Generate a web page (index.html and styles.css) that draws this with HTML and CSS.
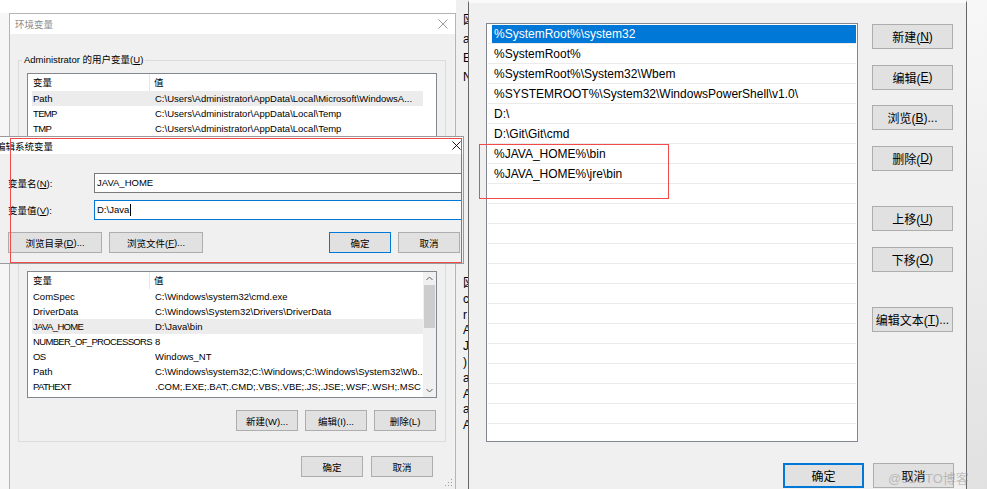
FILE: index.html
```html
<!DOCTYPE html>
<html>
  <head>
    <meta charset="UTF-8" />
    <title>环境变量</title>
    <link rel="stylesheet" href="styles.css">
  </head>
  <body>
    <div class="desktop">
      <!-- window behind, only a sliver of it shows -->
      <div class="behind">
        <div class="frag frag-top">
          <div>図</div><div>a</div><div>E</div><div>N</div>
        </div>
        <div class="frag frag-low">
          <div>図</div><div>c</div><div>r</div><div>A</div><div>J</div><div>)</div><div>a</div><div>A</div><div>a</div><div>A</div>
        </div>
      </div>

      <section class="env-dialog">
        <div class="titlebar inactive">
          <span>环境变量</span>
          <svg class="close" viewBox="0 0 10 10"><path d="M0.5 0.5 9.5 9.5M9.5 0.5 0.5 9.5"></path></svg>
        </div>
        <div class="env-body">
          <div class="group">
            <div class="group-label">Administrator 的用户变量(<u>U</u>)</div>
            <div class="listview">
              <div class="lv-main">
                <div class="lv-head"><span>变量</span><span>值</span></div>
                <div class="lv-row selected"><span>Path</span><span>C:\Users\Administrator\AppData\Local\Microsoft\WindowsA...</span></div>
                <div class="lv-row"><span class="caps">TEMP</span><span>C:\Users\Administrator\AppData\Local\Temp</span></div>
                <div class="lv-row"><span class="caps">TMP</span><span>C:\Users\Administrator\AppData\Local\Temp</span></div>
              </div>
              <div class="vscroll blank"></div>
            </div>
            <div class="btn-row">
              <button class="btn">新建(N)...</button>
              <button class="btn">编辑(E)...</button>
              <button class="btn">删除(D)</button>
            </div>
          </div>

          <div class="group group-sys">
            <div class="group-label">系统变量(<u>S</u>)</div>
            <div class="listview">
              <div class="lv-main">
                <div class="lv-head"><span>变量</span><span>值</span></div>
                <div class="lv-row"><span>ComSpec</span><span>C:\Windows\system32\cmd.exe</span></div>
                <div class="lv-row"><span>DriverData</span><span>C:\Windows\System32\Drivers\DriverData</span></div>
                <div class="lv-row selected"><span class="caps">JAVA_HOME</span><span>D:\Java\bin</span></div>
                <div class="lv-row"><span class="caps">NUMBER_OF_PROCESSORS</span><span>8</span></div>
                <div class="lv-row"><span class="caps">OS</span><span>Windows_NT</span></div>
                <div class="lv-row"><span>Path</span><span>C:\Windows\system32;C:\Windows;C:\Windows\System32\Wb...</span></div>
                <div class="lv-row"><span class="caps">PATHEXT</span><span>.COM;.EXE;.BAT;.CMD;.VBS;.VBE;.JS;.JSE;.WSF;.WSH;.MSC</span></div>
              </div>
              <div class="vscroll">
                <svg class="arrow" viewBox="0 0 13 13"><polyline points="3.5,8 6.5,5 9.5,8"></polyline></svg>
                <div class="thumb"></div>
                <div class="track"></div>
                <svg class="arrow" viewBox="0 0 13 13"><polyline points="3.5,5 6.5,8 9.5,5"></polyline></svg>
              </div>
            </div>
            <div class="btn-row">
              <button class="btn">新建(W)...</button>
              <button class="btn">编辑(I)...</button>
              <button class="btn">删除(L)</button>
            </div>
          </div>

          <div class="btn-row footer">
            <button class="btn">确定</button>
            <button class="btn">取消</button>
          </div>
        </div>
        <svg class="grip" viewBox="0 0 8 8">
          <rect x="6" y="0" width="1" height="1"></rect>
          <rect x="3" y="3" width="1" height="1"></rect><rect x="6" y="3" width="1" height="1"></rect>
          <rect x="0" y="6" width="1" height="1"></rect><rect x="3" y="6" width="1" height="1"></rect><rect x="6" y="6" width="1" height="1"></rect>
        </svg>
      </section>

      <section class="edit-dialog">
        <div class="titlebar">
          <span>编辑系统变量</span>
          <svg class="close small" viewBox="0 0 10 10"><path d="M0.5 0.5 9.5 9.5M9.5 0.5 0.5 9.5"></path></svg>
        </div>
        <div class="edit-body">
          <div class="field">
            <label>变量名(<u>N</u>):</label>
            <div class="input">JAVA_HOME</div>
          </div>
          <div class="field">
            <label>变量值(<u>V</u>):</label>
            <div class="input focused">D:\Java<span class="caret"></span></div>
          </div>
          <div class="edit-buttons">
            <button class="btn wide">浏览目录(<u>D</u>)...</button>
            <button class="btn wide">浏览文件(<u>F</u>)...</button>
            <span class="spacer"></span>
            <button class="btn default">确定</button>
            <button class="btn">取消</button>
          </div>
        </div>
      </section>

      <section class="path-dialog">
        <div class="path-main">
          <div class="path-list">
            <div class="path-row selected"><span>%SystemRoot%\system32</span></div>
            <div class="path-row"><span>%SystemRoot%</span></div>
            <div class="path-row"><span>%SystemRoot%\System32\Wbem</span></div>
            <div class="path-row"><span>%SYSTEMROOT%\System32\WindowsPowerShell\v1.0\</span></div>
            <div class="path-row"><span>D:\</span></div>
            <div class="path-row"><span>D:\Git\Git\cmd</span></div>
            <div class="path-row"><span>%JAVA_HOME%\bin</span></div>
            <div class="path-row"><span>%JAVA_HOME%\jre\bin</span></div>
            <div class="path-row"><span></span></div>
            <div class="path-row"><span></span></div>
            <div class="path-row"><span></span></div>
            <div class="path-row"><span></span></div>
            <div class="path-row"><span></span></div>
            <div class="path-row"><span></span></div>
            <div class="path-row"><span></span></div>
            <div class="path-row"><span></span></div>
            <div class="path-row"><span></span></div>
            <div class="path-row"><span></span></div>
            <div class="path-row"><span></span></div>
            <div class="path-row"><span></span></div>
            <div class="path-row"><span></span></div>
          </div>
          <div class="side-buttons">
            <button class="btn side">新建(<u>N</u>)</button>
            <button class="btn side">编辑(<u>E</u>)</button>
            <button class="btn side">浏览(<u>B</u>)...</button>
            <button class="btn side">删除(<u>D</u>)</button>
            <button class="btn side apart">上移(<u>U</u>)</button>
            <button class="btn side">下移(<u>O</u>)</button>
            <button class="btn side apart">编辑文本(<u>T</u>)...</button>
          </div>
        </div>
        <div class="path-footer">
          <button class="btn side default">确定</button>
          <button class="btn side">取消</button>
        </div>
      </section>

      <div class="far-strip"></div>

      <div class="mark mark-left"></div>
      <div class="mark mark-right"></div>
      <div class="watermark">@51CTO博客</div>
    </div>
  </body>
</html>
```

FILE: styles.css
```css
:root {
  --face: #f0f0f0;
  --btn: #e1e1e1;
  --btn-border: #adadad;
  --accent: #0078d7;
  --list-border: #828790;
  --mark: #f24a4a;
}

* {
  box-sizing: border-box;
}

body {
  margin: 0;
  font-family: "Liberation Sans", "Noto Sans CJK SC", sans-serif;
  font-size: 9.5px;
  color: #000;
}

u {
  text-decoration: underline;
}

.desktop {
  position: relative;
  width: 987px;
  height: 489px;
  overflow: hidden;
  background: linear-gradient(#fff 0 13px, #f6f6f6 13px);
}

/* shared bits */

.btn {
  font: inherit;
  color: #000;
  background: var(--btn);
  border: 1px solid var(--btn-border);
  border-radius: 0;
  padding: 0;
  margin: 0;
  width: 62px;
  height: 21px;
  display: flex;
  align-items: center;
  justify-content: center;
  white-space: nowrap;
}

.btn.default {
  border-color: var(--accent);
}

.titlebar {
  background: #fff;
  display: flex;
  align-items: center;
  justify-content: space-between;
  white-space: nowrap;
}

.close {
  width: 10px;
  height: 10px;
  stroke: #000;
  stroke-width: 1;
  fill: none;
}

.inactive {
  color: #8c8c8c;
}

.inactive .close {
  stroke: #9a9a9a;
}

/* environment variables dialog */

.env-dialog {
  position: absolute;
  left: 9px;
  top: 13px;
  width: 447px;
  height: 477px;
  border: 1px solid #b5b5b5;
  background: var(--face);
  display: flex;
  flex-direction: column;
}

.env-dialog .titlebar {
  height: 20px;
  padding: 0 7px 0 5px;
}

.env-body {
  padding: 0 9px 0 8px;
}

.group {
  border: 1px solid #dcdcdc;
  margin-top: 26px;
  padding: 0 8px 11px;
}

.group-sys {
  margin-top: 15px;
  padding-bottom: 10px;
}

.group-label {
  display: table;
  margin: -7px 0 0 -5px;
  padding: 0 2px;
  line-height: 12px;
  background: var(--face);
}

.listview {
  margin-top: 7px;
  height: 127px;
  border: 1px solid var(--list-border);
  background: #fff;
  display: flex;
  overflow: hidden;
}

.lv-main {
  flex: 1;
  min-width: 0;
  padding-left: 4px;
}

.lv-head {
  display: grid;
  grid-template-columns: 117px 1fr;
  height: 17px;
  line-height: 17px;
  padding-left: 1px;
}

.lv-head span:first-child {
  border-right: 1px solid #e5e5e5;
}

.lv-head span:last-child {
  padding-left: 4px;
}

.lv-row {
  display: grid;
  grid-template-columns: 122px 1fr;
  height: 15px;
  line-height: 15px;
  padding-left: 1px;
  white-space: nowrap;
}

.lv-row span {
  overflow: hidden;
}

.lv-row .caps {
  letter-spacing: -0.65px;
}

.lv-row.selected {
  background: #ececec;
}

.vscroll {
  width: 13px;
  background: var(--face);
  display: flex;
  flex-direction: column;
}

.vscroll.blank {
  background: #fff;
}

.arrow {
  width: 13px;
  height: 13px;
  flex: none;
  fill: none;
  stroke: #606060;
  stroke-width: 1;
}

.thumb {
  height: 43px;
  margin: 0 1px;
  background: #cdcdcd;
}

.track {
  flex: 1;
}

.btn-row {
  display: flex;
  justify-content: flex-end;
  gap: 7px;
  margin-top: 10px;
  padding-right: 1px;
}

.group-sys .btn-row {
  margin-top: 12px;
}

.btn-row.footer {
  margin-top: 14px;
  gap: 8px;
  padding-right: 13px;
}

.grip {
  position: absolute;
  right: 2px;
  bottom: 2px;
  width: 8px;
  height: 8px;
  fill: #a0a0a0;
}

/* edit system variable dialog, on top */

.edit-dialog {
  position: absolute;
  left: -10px;
  top: 136px;
  width: 474px;
  height: 128px;
  border: 1px solid #9a9a9a;
  background: var(--face);
}

.edit-dialog .titlebar {
  height: 17px;
  padding: 0 2px 0 5px;
}

.close.small {
  width: 9px;
  height: 9px;
}

.edit-body {
  padding: 19px 1px 0 17px;
  display: flex;
  flex-direction: column;
  gap: 7px;
}

.field {
  display: flex;
  align-items: center;
}

.field label {
  width: 86px;
  flex: none;
}

.input {
  flex: 1;
  height: 20px;
  line-height: 18px;
  padding-left: 2px;
  border: 1px solid #7a7a7a;
  background: #fff;
  display: flex;
  align-items: center;
}

.input.focused {
  border-color: var(--accent);
}

.caret {
  width: 1px;
  height: 12px;
  margin-left: 1px;
  background: #000;
}

.edit-buttons {
  display: flex;
  gap: 7px;
  margin-top: 5px;
  padding-right: 2px;
}

.edit-buttons .btn {
  height: 21px;
}

.btn.wide {
  width: 94px;
}

.spacer {
  flex: 1;
}

/* path editor dialog */

.behind {
  position: absolute;
  left: 456px;
  top: 0;
  width: 12px;
  height: 489px;
  background: var(--face);
  overflow: hidden;
}

.frag {
  margin-left: 7px;
  font-size: 12px;
  white-space: nowrap;
}

.frag-top {
  padding-top: 11px;
  line-height: 19px;
}

.frag-low {
  margin-top: 189px;
  line-height: 15.8px;
}

.path-dialog {
  position: absolute;
  left: 468px;
  top: 0;
  width: 499px;
  height: 489px;
  background: var(--face);
  border-left: 1px solid #666;
  border-right: 1px solid #666;
  border-top: 3px solid #fafafa;
  padding-top: 20px;
  font-size: 12px;
}

.path-main {
  display: flex;
  padding-left: 17px;
}

.path-list {
  width: 372px;
  height: 419px;
  border: 1px solid var(--list-border);
  background: #fff;
  overflow: hidden;
}

.path-row {
  height: 20px;
  margin: 0 1px;
  padding: 1px 0 0 4px;
  border-bottom: 1px solid #ebebeb;
  white-space: nowrap;
}

.path-row span {
  display: block;
  height: 18px;
  line-height: 19px;
  padding-left: 2px;
}

.path-row.selected span {
  background: var(--accent);
  color: #fff;
}

.side-buttons {
  margin: 1px 0 0 14px;
  display: flex;
  flex-direction: column;
  gap: 15.5px;
}

.btn.side {
  width: 81px;
  height: 25px;
}

.btn.apart {
  margin-top: 20px;
}

.path-footer {
  display: flex;
  justify-content: flex-end;
  gap: 9px;
  margin-top: 21px;
  padding-right: 12px;
}

.path-footer .btn.default {
  border-width: 2px;
}

.far-strip {
  position: absolute;
  left: 967px;
  top: 0;
  width: 20px;
  height: 489px;
  background: linear-gradient(#f7f7f7, #e1e1e1);
}

/* red annotation boxes */

.mark {
  position: absolute;
  border: 1px solid var(--mark);
}

.mark-left {
  left: 10px;
  top: 138px;
  width: 452px;
  height: 125px;
}

.mark-right {
  left: 479px;
  top: 144px;
  width: 190px;
  height: 55px;
}

.watermark {
  position: absolute;
  left: 888px;
  top: 468px;
  font-size: 13px;
  color: rgba(150, 150, 150, 0.55);
  white-space: nowrap;
}
```
